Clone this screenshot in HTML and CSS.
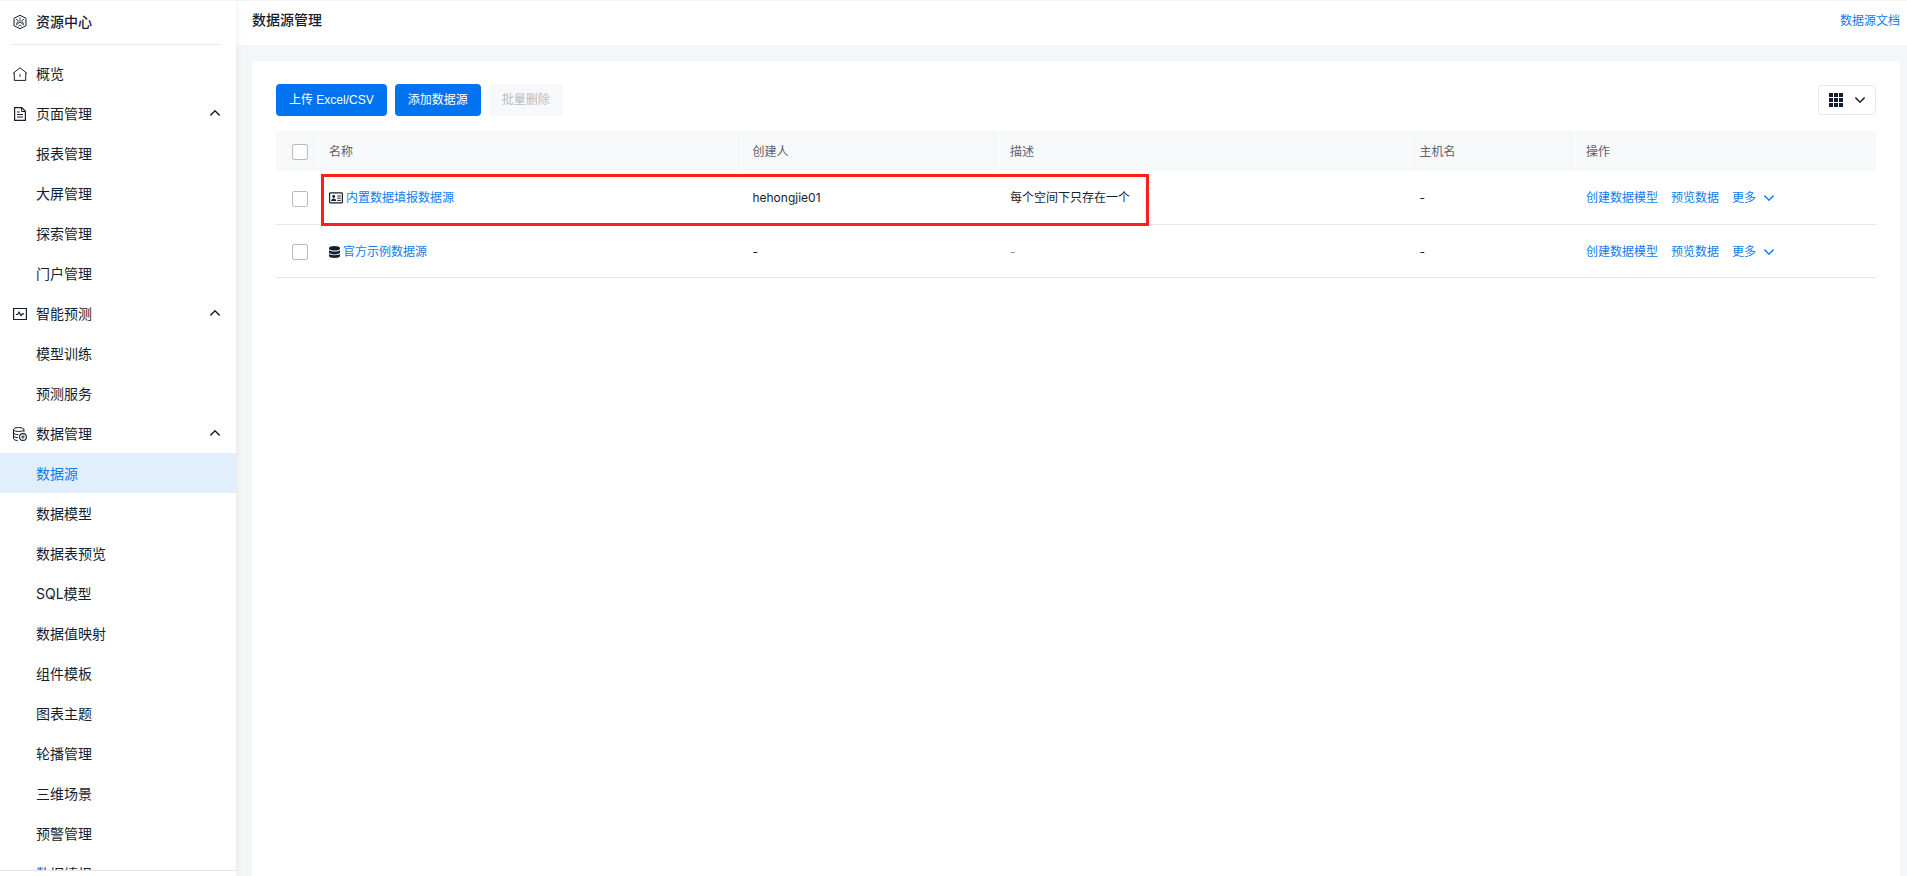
FILE: index.html
```html
<!DOCTYPE html>
<html lang="zh-CN">
<head>
<meta charset="utf-8">
<meta name="viewport" content="width=device-width, initial-scale=1">
<title>数据源管理</title>
<link rel="stylesheet" href="styles.css">
</head>
<body>
<svg class="sprite" aria-hidden="true">
  <symbol id="up" viewBox="0 0 10 6"><path d="M.4 5.400 5 .8l4.600 4.600" fill="none" stroke="currentColor" stroke-width="1.400"/></symbol>
  <symbol id="down" viewBox="0 0 10 6"><path d="M.4.600 5 5.200 9.600.600" fill="none" stroke="currentColor" stroke-width="1.400"/></symbol>
</svg>
<div class="app">
  <aside class="sidebar">
    <div class="brand">
      <svg class="icon" viewBox="0 0 14 14" fill="none" stroke="currentColor"><path d="M7 .3 13 3.300v7.400L7 13.700 1 10.700V3.300z"/><path d="M7 2.200v5M7 7.200 3 10M7 7.200l4 2.800M3 4.200 5 5.400v2L3 8.600M11 4.200 9 5.400v2l2 1.200M5.200 11.200 7 10l1.800 1.200" stroke-width=".8"/></svg>
      <span>资源中心</span>
    </div>
    <nav class="nav" aria-label="资源中心">
      <a class="item" href="#"><svg class="icon" viewBox="0 0 14 14" fill="none" stroke="currentColor"><path d="M1.300 13.400V6.200H.3L7 .7l6.700 5.500h-1v7.200zM7 7.200v2.600"/></svg>概览</a>
      <button class="item" type="button" aria-expanded="true"><svg class="icon" viewBox="0 0 14 14" fill="none" stroke="currentColor"><path d="M1.600.6h7.200l3.600 3.700v9.100H1.600z" stroke-width="1.200"/><path d="M8.600.8v3.700h3.600M4 5h2.600M4 7.500h6M4 10h6"/></svg>页面管理<svg class="chev"><use href="#up"/></svg></button>
      <a class="item" href="#">报表管理</a>
      <a class="item" href="#">大屏管理</a>
      <a class="item" href="#">探索管理</a>
      <a class="item" href="#">门户管理</a>
      <button class="item" type="button" aria-expanded="true"><svg class="icon" viewBox="0 0 14 14" fill="none" stroke="currentColor"><path d="M.6 1.500h12.800v11H.6z" stroke-width="1.200"/><path d="M3 7.500h1.500L6 5.200l2 3.400 1.200-1.800H11" stroke-width="1.200"/></svg>智能预测<svg class="chev"><use href="#up"/></svg></button>
      <a class="item" href="#">模型训练</a>
      <a class="item" href="#">预测服务</a>
      <button class="item" type="button" aria-expanded="true"><svg class="icon" viewBox="0 0 14 14" fill="none" stroke="currentColor"><ellipse cx="5.700" cy="2.500" rx="5.200" ry="2"/><path d="M.5 2.500v9c0 1 1.800 1.900 4.300 2.100M10.900 2.500v2.600M.5 5.600c0 1.100 2 2 4.900 2M.5 8.600c0 1.100 1.600 1.900 4.300 2"/><circle cx="10" cy="10" r="3.400" stroke-width="1.100"/><circle cx="10" cy="10" r="1.100"/></svg>数据管理<svg class="chev"><use href="#up"/></svg></button>
      <a class="item active" href="#" aria-current="page">数据源</a>
      <a class="item" href="#">数据模型</a>
      <a class="item" href="#">数据表预览</a>
      <a class="item" href="#">SQL模型</a>
      <a class="item" href="#">数据值映射</a>
      <a class="item" href="#">组件模板</a>
      <a class="item" href="#">图表主题</a>
      <a class="item" href="#">轮播管理</a>
      <a class="item" href="#">三维场景</a>
      <a class="item" href="#">预警管理</a>
      <a class="item" href="#">数据填报</a>
    </nav>
    <div class="sidebar-foot"></div>
  </aside>
  <div class="content">
    <header class="topbar">
      <h1>数据源管理</h1>
      <a class="link" href="#">数据源文档</a>
    </header>
    <main class="panel">
      <div class="toolbar">
        <button class="btn primary" type="button">上传 Excel/CSV</button>
        <button class="btn primary" type="button">添加数据源</button>
        <button class="btn" type="button" disabled>批量删除</button>
        <button class="view" type="button" aria-label="切换视图">
          <svg class="icon" viewBox="0 0 14 14" fill="currentColor"><path d="M0 0h4v4H0zM5 0h4v4H5zM10 0h4v4h-4zM0 5h4v4H0zM5 5h4v4H5zM10 5h4v4h-4zM0 10h4v4H0zM5 10h4v4H5zM10 10h4v4h-4z"/></svg>
          <svg class="chev"><use href="#down"/></svg>
        </button>
      </div>
      <div class="table-wrap">
        <table>
          <colgroup><col class="c-check"><col class="c-name"><col class="c-user"><col class="c-desc"><col class="c-host"><col class="c-ops"></colgroup>
          <thead>
            <tr><th class="check"><input type="checkbox" aria-label="全选"></th><th>名称</th><th>创建人</th><th>描述</th><th>主机名</th><th>操作</th></tr>
          </thead>
          <tbody>
            <tr>
              <td class="check"><input type="checkbox" aria-label="选择 内置数据填报数据源"></td>
              <td><a class="link source" href="#"><svg class="card-icon" viewBox="0 0 14 12"><rect x=".6" y=".9" width="12.800" height="10" rx=".8" fill="none" stroke="currentColor" stroke-width="1.200"/><circle cx="4.700" cy="4.500" r="1.400" fill="currentColor"/><path d="M2.200 8.900c0-1.600 1-2.500 2.500-2.500s2.500.9 2.500 2.500z" fill="currentColor"/><path d="M8.300 4h3.500M8.300 6.200h3.500M8.300 8.400h3.500" stroke="currentColor"/></svg>内置数据填报数据源</a></td>
              <td>hehongjie01</td><td>每个空间下只存在一个</td><td>-</td>
              <td><div class="ops"><a class="link" href="#">创建数据模型</a><a class="link" href="#">预览数据</a><button class="link more" type="button">更多<svg class="chev"><use href="#down"/></svg></button></div></td>
            </tr>
            <tr>
              <td class="check"><input type="checkbox" aria-label="选择 官方示例数据源"></td>
              <td><a class="link source" href="#"><svg class="db-icon" viewBox="0 0 11 12" fill="currentColor"><path d="M0 2C0 .9 2.400 0 5.500 0S11 .9 11 2v.7c0 1.100-2.400 1.900-5.500 1.900S0 3.800 0 2.700zM0 4.300c1.200.8 3.200 1.200 5.500 1.200S9.800 5.100 11 4.300v2.200c0 1.100-2.400 1.900-5.500 1.900S0 7.600 0 6.500zM0 8.100c1.200.8 3.200 1.200 5.500 1.200S9.800 8.900 11 8.100V10c0 1.100-2.400 2-5.500 2S0 11.100 0 10z"/></svg>官方示例数据源</a></td>
              <td>-</td><td class="muted">-</td><td>-</td>
              <td><div class="ops"><a class="link" href="#">创建数据模型</a><a class="link" href="#">预览数据</a><button class="link more" type="button">更多<svg class="chev"><use href="#down"/></svg></button></div></td>
            </tr>
          </tbody>
        </table>
        <div class="highlight"></div>
      </div>
    </main>
  </div>
</div>
</body>
</html>
```
FILE: styles.css
```css
* { box-sizing: border-box; }

body {
  margin: 0;
  color: #141e31;
  background: #f5f6f8;
  font: 12px/20px Inter, "Noto Sans CJK SC", sans-serif;
}

button { font: inherit; color: inherit; border: 0; background: none; padding: 0; cursor: pointer; }
svg { display: block; flex: none; }
.sprite { position: absolute; width: 0; height: 0; }
.icon { width: 14px; height: 14px; }
.chev { width: 10px; height: 6px; }

.app { display: flex; height: 100vh; overflow: hidden; border-top: 1px solid #f4f4f6; }

.sidebar {
  display: flex;
  flex-direction: column;
  flex: none;
  width: 236px;
  background: #fff;
  box-shadow: 0 0 8px rgba(0, 0, 0, .08);
  z-index: 1;
  font-size: 14px;
}
.brand {
  display: flex;
  align-items: center;
  gap: 9px;
  height: 44px;
  margin: 0 16px 8px 12px;
  padding: 0 0 2px 1px;
  border-bottom: 1px solid #e6e7e9;
  font-weight: 500;
}
.nav { flex: 1; min-height: 0; overflow: hidden; }
.item {
  display: flex;
  align-items: center;
  gap: 9px;
  width: 100%;
  height: 40px;
  padding: 2px 16px 0 36px;
  color: inherit;
  text-decoration: none;
}
.item:has(.icon) { padding-left: 13px; }
.item .chev { margin: 0 0 2px auto; }
.item.active { background: #e1effd; color: #0f7bf5; }
.sidebar-foot { height: 6px; border-top: 1px solid #e6e7e9; }

.content { display: flex; flex-direction: column; flex: 1; min-width: 0; }
.topbar {
  display: flex;
  align-items: center;
  justify-content: space-between;
  height: 44px;
  padding: 0 7px 6px 16px;
  background: #fff;
}
.topbar .link { padding-top: 2px; }
h1 { margin: 0; font-size: 14px; font-weight: 500; }
.link { color: #0f7bf5; text-decoration: none; }

.panel {
  flex: 1;
  margin: 16px 7px 0 16px;
  padding: 23px 24px;
  background: #fff;
  border-radius: 4px 4px 0 0;
}
.toolbar { display: flex; align-items: center; gap: 8px; margin-bottom: 15px; }
.btn {
  height: 32px;
  padding: 0 13px;
  border-radius: 4px;
  font-family: "Liberation Sans", "Noto Sans CJK SC", sans-serif;
}
.primary { background: #0073f0; color: #fff; }
.btn:disabled { background: #f7f8fa; color: #b9bcc2; cursor: default; }
.view {
  display: flex;
  align-items: center;
  gap: 12px;
  height: 30px;
  margin-left: auto;
  padding: 0 10px;
  border: 1px solid #e6e7e9;
  border-radius: 4px;
}

.table-wrap { position: relative; }
table { width: 100%; table-layout: fixed; border-collapse: separate; border-spacing: 0; }
.c-check { width: 43px; }
.c-user { width: 16.1%; }
.c-desc { width: 25.6%; }
.c-host { width: 10.4%; }
.c-ops { width: 300px; }
th {
  height: 40px;
  padding: 1px 10px 0;
  background: #f7f8fa;
  border-right: 1px solid #fff;
  color: #5c626d;
  font-weight: 400;
  text-align: left;
}
th:first-child { border-top-left-radius: 4px; }
th:last-child { border-right: 0; border-top-right-radius: 4px; }
td { height: 53px; padding: 1px 10px 0; border-bottom: 1px solid #e6e7e9; }
tbody tr:first-child td { height: 54px; }
th.check, td.check { padding: 2px 0 0 16px; }
.check input {
  appearance: none;
  display: block;
  width: 16px;
  height: 16px;
  margin: 0;
  border: 1px solid #b9bcc2;
  border-radius: 2px;
  background: #fff;
}
.muted { color: #8b8f97; }
.source { display: flex; align-items: center; gap: 3px; }
.source svg { color: #141e31; }
.card-icon { width: 14px; height: 12px; }
.db-icon { width: 11px; height: 12px; }
.ops { display: flex; gap: 13px; }
.more { display: flex; align-items: center; gap: 8px; }

/* Frame drawn over the first data source row */
.highlight {
  position: absolute;
  top: 43px;
  left: 45px;
  width: 51.75%;
  height: 52px;
  border: 3px solid #ff1f1a;
  pointer-events: none;
}
```
